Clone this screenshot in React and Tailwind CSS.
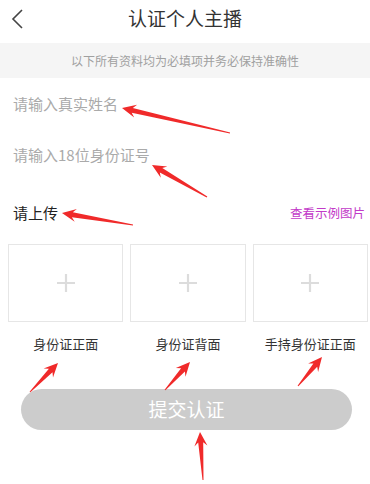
import React from 'react';

const arrows = [
    [230, 133, 122, 108],
    [207, 197, 152, 165],
    [133, 225, 62, 213],
    [30, 392, 58, 363],
    [165, 390, 190, 362],
    [298, 386, 322, 357],
    [203, 480, 200, 432],
];

// tapered red arrow from tail to tip
const arrowPoints = ([x1, y1, x2, y2]) => {
    const len = Math.hypot(x2 - x1, y2 - y1);
    const dx = (x2 - x1) / len, dy = (y2 - y1) / len;
    const nx = -dy, ny = dx;
    const hl = 14, sw = 5, hw = 13;
    const bx = x2 - dx * hl, by = y2 - dy * hl;
    const cx = x2 - dx * hl * 0.75, cy = y2 - dy * hl * 0.75;
    const pts = [
        [x1 + nx * 0.5, y1 + ny * 0.5],
        [cx + nx * sw / 2, cy + ny * sw / 2],
        [bx + nx * hw / 2, by + ny * hw / 2],
        [x2, y2],
        [bx - nx * hw / 2, by - ny * hw / 2],
        [cx - nx * sw / 2, cy - ny * sw / 2],
        [x1 - nx * 0.5, y1 - ny * 0.5],
    ];
    return pts.map((p) => p.map((v) => v.toFixed(1)).join(',')).join(' ');
};

const uploads = ['身份证正面', '身份证背面', '手持身份证正面'];

const App = () => {
    return (
        <div className="relative w-[370px] h-[484px] bg-white overflow-hidden" style={{ fontFamily: '"Noto Sans CJK SC", "Noto Sans", sans-serif' }}>
            <div className="relative h-[43px] flex items-center justify-center">
                <svg className="absolute left-[10px] top-[8px]" width="16" height="22" viewBox="0 0 16 22">
                    <path d="M12 2 L3 11 L12 20" fill="none" stroke="#444" strokeWidth="1.6" />
                </svg>
                <span className="text-[19px] text-[#333] leading-none -mt-[8px]">认证个人主播</span>
            </div>
            <div className="h-[35px] bg-[#f5f5f5] flex items-center justify-center text-[12px] text-[#a0a0a0]">
                以下所有资料均为必填项并务必保持准确性
            </div>
            <div className="h-[52px] flex items-center px-[13px] text-[15px] text-[#aaa]">请输入真实姓名</div>
            <div className="h-[51px] flex items-center px-[13px] text-[15px] text-[#aaa]">请输入18位身份证号</div>
            <div className="mt-[9px] h-[46px] flex items-center justify-between pl-[13px] pr-[5px]">
                <span className="text-[15px] text-[#222]">请上传</span>
                <span className="text-[12.5px] text-[#c23ac8]">查看示例图片</span>
            </div>
            <div className="grid grid-cols-3 gap-[7px] pl-[8px] pr-[2px] pt-[8px]">
                {uploads.map((label) => (
                    <div key={label} className="flex flex-col items-center">
                        <div className="w-full h-[78px] border border-[#e6e6e6] flex items-center justify-center">
                            <svg width="20" height="20" viewBox="0 0 20 20">
                                <path d="M10 1 V19 M1 10 H19" stroke="#dcdcdc" strokeWidth="2.2" />
                            </svg>
                        </div>
                        <div className="mt-[12px] text-[13px] text-[#333]">{label}</div>
                    </div>
                ))}
            </div>
            <div className="mx-[21px] mt-[35px] w-[331px] h-[41px] rounded-full bg-[#cccccc] flex items-center justify-center text-[19px] text-white">
                提交认证
            </div>
            <svg className="absolute left-0 top-0 pointer-events-none" width="370" height="484">
                {arrows.map((a, i) => (
                    <polygon key={i} points={arrowPoints(a)} fill="#f02a2a" />
                ))}
            </svg>
        </div>
    );
};

export default App;
